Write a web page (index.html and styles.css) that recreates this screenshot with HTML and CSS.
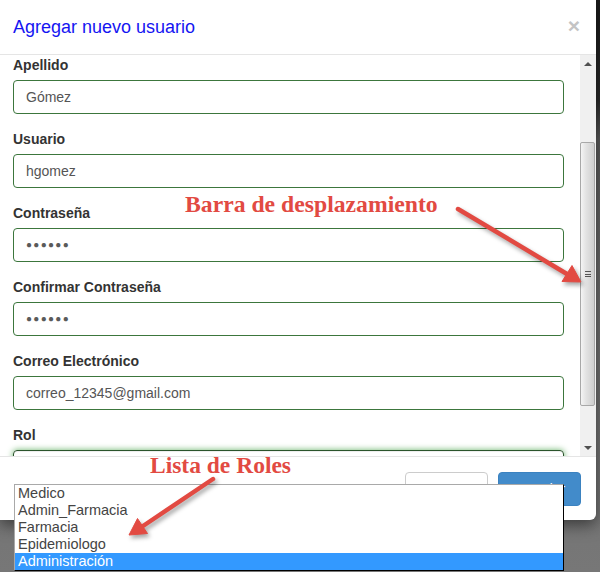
FILE: index.html
```html
<!DOCTYPE html>
<html lang="es">
<head>
<meta charset="utf-8">
<link rel="stylesheet" href="styles.css">
</head>
<body>
<div class="modal">
  <div class="modal-header">
    <h4 class="modal-title">Agregar nuevo usuario</h4>
    <span class="close">&times;</span>
  </div>
  <div class="modal-body">
    <div class="form">
      <div class="group"><label>Apellido</label><div class="field">Gómez</div></div>
      <div class="group"><label>Usuario</label><div class="field">hgomez</div></div>
      <div class="group"><label>Contraseña</label><div class="field dots">●●●●●●</div></div>
      <div class="group"><label>Confirmar Contraseña</label><div class="field dots">●●●●●●</div></div>
      <div class="group"><label>Correo Electrónico</label><div class="field">correo_12345@gmail.com</div></div>
      <div class="group"><label>Rol</label><div class="field focus"></div></div>
    </div>
    <div class="scrollbar">
      <div class="sb-btn"><span class="tri up"></span></div>
      <div class="sb-track">
        <div class="sb-thumb"><span class="grip"></span></div>
      </div>
      <div class="sb-btn"><span class="tri down"></span></div>
    </div>
  </div>
  <div class="modal-footer">
    <button class="btn btn-default">Cerrar</button>
    <button class="btn btn-primary">Guardar</button>
  </div>
</div>

<ul class="listbox">
  <li>Medico</li>
  <li>Admin_Farmacia</li>
  <li>Farmacia</li>
  <li>Epidemiologo</li>
  <li class="sel">Administración</li>
</ul>

<div class="note note-scroll">Barra de desplazamiento</div>
<div class="note note-roles">Lista de Roles</div>

<svg class="arrows" width="600" height="572" viewBox="0 0 600 572">
  <g fill="#e24a42" stroke="#e24a42">
    <line x1="458" y1="209" x2="567" y2="274" stroke-width="4.5" stroke-linecap="round"/>
    <polygon points="581,282 562,281.5 572,265.5" stroke-width="1" stroke-linejoin="round"/>
    <line x1="213" y1="479" x2="143" y2="526" stroke-width="4.5" stroke-linecap="round"/>
    <polygon points="129,535 147.5,533.5 137.5,518.5" stroke-width="1" stroke-linejoin="round"/>
  </g>
</svg>
</body>
</html>
```
FILE: styles.css
```css
* { box-sizing: border-box; }
html, body { margin: 0; padding: 0; }
body {
  width: 600px;
  height: 572px;
  overflow: hidden;
  position: relative;
  font-family: "Liberation Sans", Arial, sans-serif;
  font-size: 14px;
  color: #333;
  background: linear-gradient(to bottom, #1a1a1a 0, #2a2a2a 100px, #5a5a5a 140px, #6e6e6e 300px, #777 572px);
}
.modal {
  width: 596px;
  height: 520px;
  background: #fff;
  border-radius: 0 0 6px 0;
  box-shadow: 0 5px 15px rgba(0,0,0,.5);
  display: flex;
  flex-direction: column;
}
.modal-header {
  height: 55px;
  padding: 15px 16px 0 13px;
  border-bottom: 1px solid #e5e5e5;
  display: flex;
  justify-content: space-between;
  align-items: flex-start;
}
.modal-title {
  margin: 0;
  font-size: 18px;
  font-weight: normal;
  line-height: 25px;
  color: #1515f2;
}
.close {
  font-size: 21px;
  font-weight: bold;
  line-height: 1;
  color: #c4c4c4;
}
.modal-body {
  height: 401px;
  display: flex;
  overflow: hidden;
}
.form {
  flex: 1;
  padding: 0 16px 0 13px;
  overflow: hidden;
}
.group { margin-bottom: 15px; }
.group label {
  display: block;
  font-weight: bold;
  line-height: 20px;
  margin-bottom: 5px;
}
.field {
  height: 34px;
  border: 1px solid #3c763d;
  border-radius: 4px;
  padding: 0 12px;
  line-height: 32px;
  color: #555;
}
.field.dots {
  font-size: 10px;
  letter-spacing: 1.3px;
  color: #5a5a5a;
}
.field.focus {
  border-color: #2b542c;
  box-shadow: inset 0 1px 1px rgba(0,0,0,.075), 0 0 6px #67b168;
}
.scrollbar {
  width: 16px;
  background: #f0f0f0;
  display: flex;
  flex-direction: column;
}
.sb-btn {
  height: 17px;
  display: flex;
  align-items: center;
  justify-content: center;
}
.tri {
  width: 0; height: 0;
  border-left: 4px solid transparent;
  border-right: 4px solid transparent;
}
.tri.up { border-bottom: 4px solid #505050; }
.tri.down { border-top: 4px solid #505050; }
.sb-track {
  flex: 1;
  padding-top: 70px;
  padding-bottom: 33px;
  display: flex;
}
.sb-thumb {
  flex: 1;
  margin: 0 1px 0 0;
  border: 1px solid #a8a8a8;
  border-radius: 2px;
  background: linear-gradient(to right, #f4f4f4, #e2e2e2 40%, #cfcfcf);
  display: flex;
  align-items: center;
  justify-content: center;
}
.grip {
  width: 6px;
  height: 6px;
  border-top: 1px solid #555;
  border-bottom: 1px solid #555;
  background: linear-gradient(#555, #555) center / 100% 1px no-repeat;
}
.modal-footer {
  flex: 1;
  border-top: 1px solid #e5e5e5;
  padding: 15px 15px 0;
  display: flex;
  justify-content: flex-end;
  gap: 10px;
}
.btn {
  width: 83px;
  height: 34px;
  border-radius: 4px;
  font-family: inherit;
  font-size: 14px;
  border: 1px solid #ccc;
}
.btn-default { background: #fff; color: #333; }
.btn-primary { background: #428bca; border-color: #3b82c0; color: #fff; }
.listbox {
  position: absolute;
  left: 14px;
  top: 484px;
  width: 550px;
  margin: 0;
  padding: 0;
  list-style: none;
  background: #fff;
  border-top: 1px solid #a9a9a9;
  border-left: 1px solid #a9a9a9;
  border-right: 1px solid #000;
  border-bottom: 1px solid #000;
  font-size: 14.5px;
  color: #444;
}
.listbox li {
  height: 17px;
  line-height: 17px;
  padding-left: 3px;
}
.listbox li.sel { background: #3399ff; color: #fff; }
.note {
  position: absolute;
  font-family: "Liberation Serif", "Times New Roman", serif;
  font-weight: bold;
  color: #e24a42;
  line-height: 1;
  white-space: nowrap;
}
.note-scroll { left: 185px; top: 193px; font-size: 23.7px; }
.note-roles { left: 150px; top: 454px; font-size: 23.5px; }
.arrows {
  position: absolute;
  left: 0;
  top: 0;
  pointer-events: none;
  filter: drop-shadow(2px 3px 2px rgba(0,0,0,.35));
}
```
